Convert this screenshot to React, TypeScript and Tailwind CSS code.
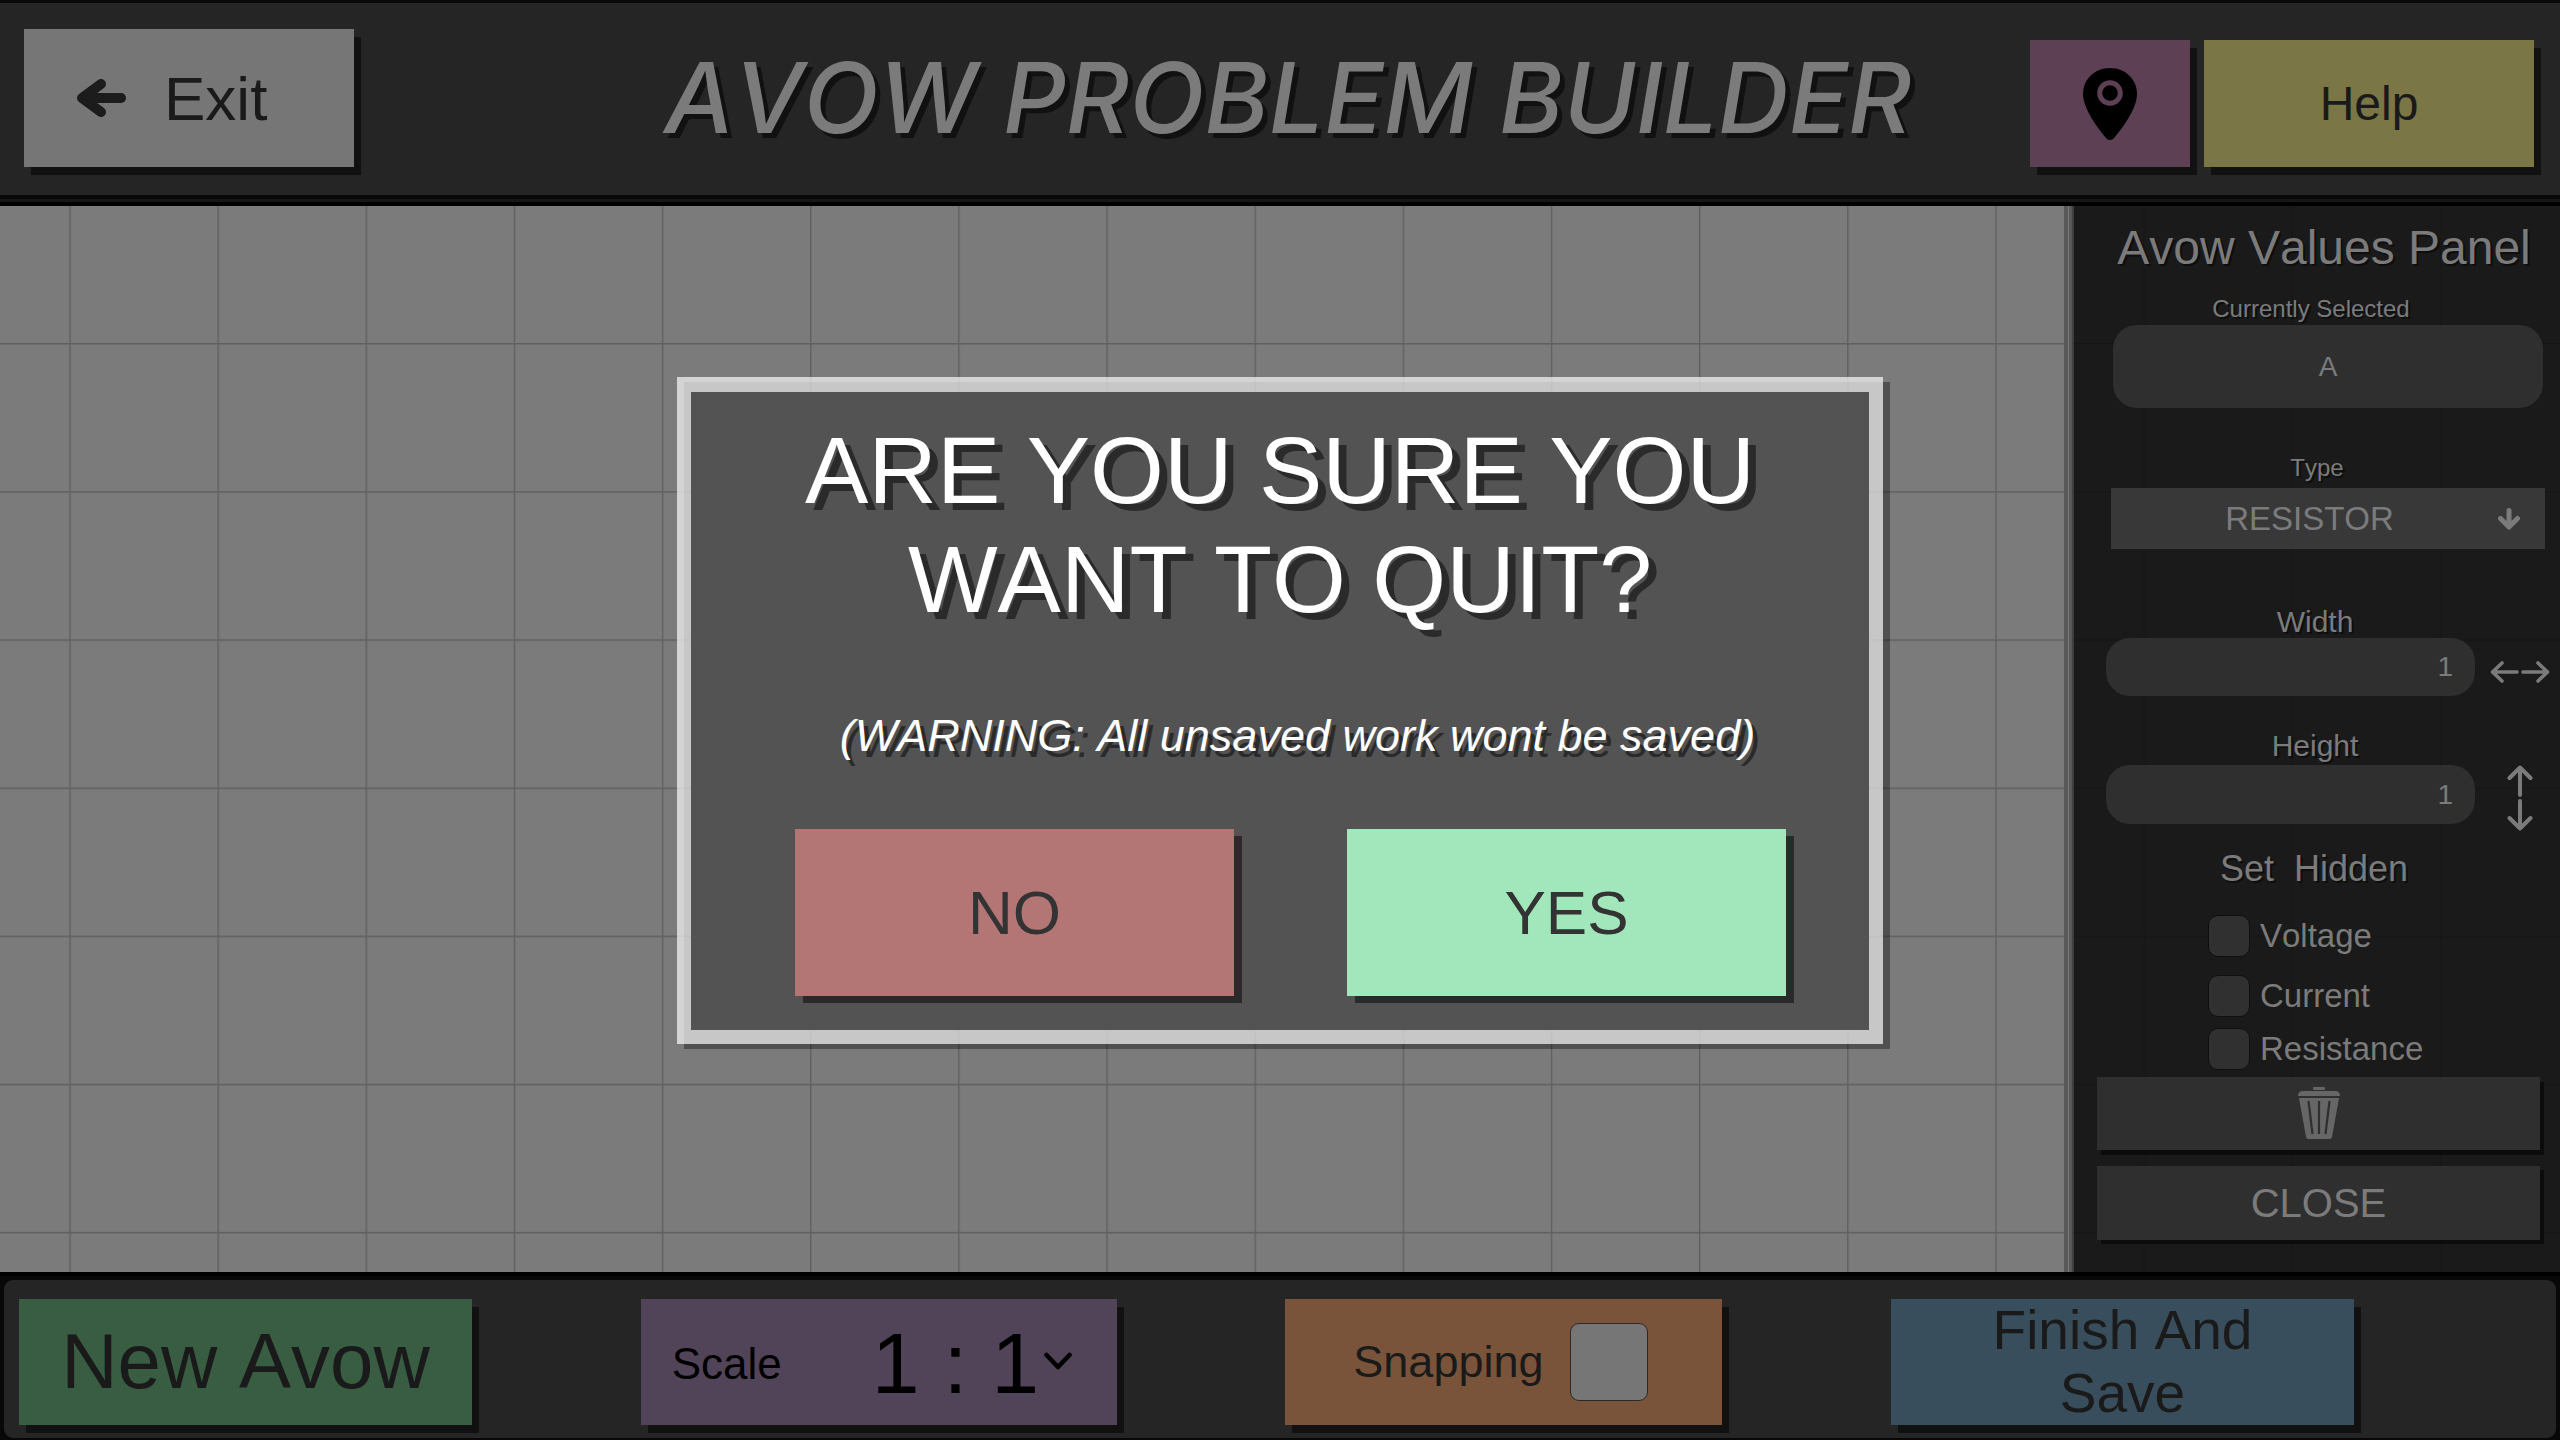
import type { ReactNode } from "react";

const hardShadow = "shadow-[7px_8px_0_#111111]";

function BackArrow() {
  return (
    <svg width="52" height="42" viewBox="0 0 52 42" fill="none" stroke="#1c1c1c" strokeWidth="10" strokeLinecap="round" strokeLinejoin="round" aria-hidden="true">
      <path d="M26 7 L7 21 L26 35" />
      <path d="M9 21 H46" />
      <path d="M8 21 L20 12 V30 Z" fill="#1c1c1c" stroke="none" />
    </svg>
  );
}

function PinIcon() {
  return (
    <svg width="54" height="72" viewBox="0 0 54 72" aria-hidden="true">
      <path d="M27 0 C12 0 0 11 0 26 C0 41 16 62 23.500 70.500 Q27 73.500 30.500 70.500 C38 62 54 41 54 26 C54 11 42 0 27 0 Z" fill="#000" />
      <circle cx="27" cy="25" r="10.300" fill="none" stroke="#5e4055" strokeWidth="5" />
    </svg>
  );
}

function DownArrow() {
  return (
    <svg width="22" height="22" viewBox="0 0 22 22" fill="none" stroke="#7b7b7b" strokeWidth="5" strokeLinecap="round" strokeLinejoin="round" aria-hidden="true">
      <path d="M11 2.500 V18 M2.500 10.500 L11 19 L19.500 10.500" />
    </svg>
  );
}

function HorizontalArrows() {
  return (
    <svg width="60" height="24" viewBox="0 0 60 24" fill="none" stroke="#7b7b7b" strokeWidth="3.600" strokeLinecap="round" strokeLinejoin="round" aria-hidden="true">
      <path d="M12 3 L2.500 12 L12 21 M3 12 H27 M33 12 H57 M48 3 L57.500 12 L48 21" />
    </svg>
  );
}

function VerticalArrows() {
  return (
    <svg width="26" height="66" viewBox="0 0 26 66" fill="none" stroke="#7b7b7b" strokeWidth="4" strokeLinecap="round" strokeLinejoin="round" aria-hidden="true">
      <path d="M2.500 13 L13 2.500 L23.500 13 M13 3 V30 M13 36 V63 M2.500 53 L13 63.500 L23.500 53" />
    </svg>
  );
}

function TrashIcon() {
  return (
    <svg width="44" height="53" viewBox="0 0 44 53" aria-hidden="true">
      <g fill="#666666">
        <rect x="16" y="0" width="12" height="3" rx="1" />
        <path d="M1 9 Q1 4 6 4 H38 Q43 4 43 9 Z" />
        <path d="M2 11 H42 L35 50 Q34.500 52 33 52 H11 Q9.500 52 9 50 Z" />
      </g>
      <g stroke="#2f2f2f" strokeWidth="2.200">
        <path d="M11.500 14 L15.500 47 M22 14 V47 M32.500 14 L28.500 47" />
      </g>
    </svg>
  );
}

function GridLines() {
  return (
    <svg className="absolute inset-0 h-full w-full" aria-hidden="true">
      <defs>
        <pattern id="cells" x="69.300" y="137" width="148.150" height="148.150" patternUnits="userSpaceOnUse">
          <path d="M0.700 0 V148.150 M0 0.700 H148.150" stroke="#606060" strokeWidth="1.400" />
        </pattern>
      </defs>
      <rect width="100%" height="100%" fill="url(#cells)" />
    </svg>
  );
}

function Header() {
  return (
    <header className="border-t-[3px] border-t-[#080808] bg-[#252525]">
      <div className="grid h-[192px] grid-cols-[1fr_auto_1fr] items-end pr-[26px] pb-7 pl-6">
        <button className={`flex h-[138px] w-[330px] items-center bg-[#767676] pl-[51px] text-[62px] text-[#1a1a1a] ${hardShadow}`}>
          <BackArrow />
          <span className="ml-[37px]">Exit</span>
        </button>
        <h1 className="pl-[18px] font-['Inter'] text-[98px] leading-[138px] font-medium text-[#7b7b7b] italic [text-shadow:5px_5px_0_#111111]">
          AVOW PROBLEM BUILDER
        </h1>
        <div className="flex justify-end gap-[14px]">
          <button aria-label="Location" className={`flex h-[127px] w-[160px] items-center justify-center bg-[#5e4055] ${hardShadow}`}>
            <PinIcon />
          </button>
          <button className={`h-[127px] w-[330px] bg-[#7a7645] text-[48px] text-[#1a1a1a] ${hardShadow}`}>Help</button>
        </div>
      </div>
      <div className="h-1 bg-[#080808]" />
      <div className="h-[3px] bg-[#161616]" />
      <div className="h-1 bg-black" />
    </header>
  );
}

const labelShadow = "[text-shadow:2px_2px_0_#0e0e0e]";

function PanelLabel({ htmlFor, className, children }: { htmlFor: string; className: string; children: ReactNode }) {
  return (
    <label htmlFor={htmlFor} className={`block text-center ${labelShadow} ${className}`}>
      {children}
    </label>
  );
}

function HiddenOption({ id, label }: { id: string; label: string }) {
  return (
    <div className="flex h-[42px] items-center gap-[10px] pl-[134px] text-[33px]">
      <input id={id} type="checkbox" className="size-[42px] appearance-none rounded-[10px] border border-[#0f0f0f] bg-[#303030]" />
      <label htmlFor={id}>{label}</label>
    </div>
  );
}

function ValuesPanel() {
  return (
    <aside className="relative flex">
      <div className="w-1 bg-[#595959]" />
      <div className="w-px bg-[#7b7b7b]" />
      <div className="w-[3px] bg-[#575757]" />
      <div className="w-[2px] bg-[#3f3f3f]" />
      <div className="w-[486px] bg-[#0c0c0c]/87 pt-[14px] pb-8 text-[#7b7b7b]">
        <h2 className={`pl-[14px] text-center text-[48px] leading-[56px] ${labelShadow}`}>Avow Values Panel</h2>

        <PanelLabel htmlFor="selected" className="mt-[19px] pr-3 text-[24px] leading-7">Currently Selected</PanelLabel>
        <div className="mt-[2px] pr-[17px] pl-[39px]">
          <input id="selected" defaultValue="A" className="block h-[83px] w-full rounded-[24px] bg-[#2f2f2f] text-center text-[28px]" />
        </div>

        <PanelLabel htmlFor="type" className="mt-[46px] text-[24px] leading-7">Type</PanelLabel>
        <div className="relative mt-[6px] mr-[15px] ml-[37px]">
          <select id="type" className="block h-[61px] w-full appearance-none bg-[#383838] pr-[37px] text-[33px] [text-align-last:center]">
            <option>RESISTOR</option>
          </select>
          <span className="pointer-events-none absolute top-5 right-[25px]">
            <DownArrow />
          </span>
        </div>

        <PanelLabel htmlFor="width" className="mt-[57px] pr-1 text-[30px] leading-8">Width</PanelLabel>
        <div className="flex items-center gap-[15px] pr-[10px] pl-8">
          <input id="width" defaultValue="1" className="h-[58px] min-w-0 flex-1 rounded-[24px] bg-[#2f2f2f] pr-[22px] text-right text-[28px]" />
          <span className="flex w-[60px] justify-center pt-[10px]">
            <HorizontalArrows />
          </span>
        </div>

        <PanelLabel htmlFor="height" className="mt-[34px] pr-1 text-[30px] leading-8">Height</PanelLabel>
        <div className="mt-[3px] flex h-16 items-start gap-[15px] pr-[10px] pl-8">
          <input id="height" defaultValue="1" className="h-[59px] min-w-0 flex-1 rounded-[24px] bg-[#2f2f2f] pr-[22px] text-right text-[28px]" />
          <span className="flex w-[60px] justify-center">
            <VerticalArrows />
          </span>
        </div>

        <fieldset className="pt-5">
          <legend className={`float-left w-full pr-[6px] text-center text-[36px] leading-10 whitespace-pre ${labelShadow}`}>{"Set  Hidden"}</legend>
          <div className="clear-both pt-[26px]">
            <HiddenOption id="voltage" label="Voltage" />
          </div>
          <div className="pt-[18px]">
            <HiddenOption id="current" label="Current" />
          </div>
          <div className="pt-[11px]">
            <HiddenOption id="resistance" label="Resistance" />
          </div>
        </fieldset>

        <div className="mt-[7px] mr-5 ml-[23px] flex flex-col gap-4">
          <button aria-label="Delete" className="flex h-[73px] items-center justify-center bg-[#2f2f2f] shadow-[4px_5px_0_#0c0c0c]">
            <TrashIcon />
          </button>
          <button className="h-[74px] bg-[#2f2f2f] text-[40px] shadow-[4px_4px_0_#0c0c0c]">CLOSE</button>
        </div>
      </div>
    </aside>
  );
}

function Toolbar() {
  return (
    <footer className="border-t-4 border-t-black bg-[#080808] px-1 pt-1 pb-[2px]">
      <div className="flex h-[158px] items-center justify-between rounded-[9px] bg-[#252525] pt-[6px] pr-[202px] pl-[15px] pb-[1px]">
        <button className={`h-[126px] w-[453px] bg-[#385d43] text-[78px] whitespace-nowrap text-[#1a1a1a] ${hardShadow}`}>New Avow</button>
        <div className={`flex h-[126px] w-[476px] items-center bg-[#524458] pl-[31px] text-black ${hardShadow}`}>
          <label htmlFor="scale" className="pt-1 text-[44px]">Scale</label>
          <div className="relative ml-[90px]">
            <select id="scale" className="h-[126px] w-[200px] appearance-none text-[86px]">
              <option>1 : 1</option>
            </select>
            <svg className="pointer-events-none absolute top-[53px] right-0" width="28" height="19" viewBox="0 0 28 19" fill="none" stroke="#000" strokeWidth="4.600" strokeLinecap="round" strokeLinejoin="round" aria-hidden="true">
              <path d="M2.500 3 L14 15 L25.500 3" />
            </svg>
          </div>
        </div>
        <div className={`flex h-[126px] w-[437px] items-center bg-[#79543a] pl-[68px] text-[#1a1a1a] ${hardShadow}`}>
          <label htmlFor="snapping" className="text-[45px]">Snapping</label>
          <input id="snapping" type="checkbox" className="ml-[26px] size-[78px] appearance-none rounded-[9px] border border-[#2a2a2a] bg-[#767676]" />
        </div>
        <button className={`h-[126px] w-[463px] bg-[#394e5d] px-16 text-[55px] leading-[63px] text-[#1a1a1a] ${hardShadow}`}>Finish And Save</button>
      </div>
    </footer>
  );
}

function QuitDialog() {
  return (
    <div className="fixed inset-0 flex items-center justify-center pb-[19px]">
      <div className="relative">
        <div className="absolute top-[5px] left-[7px] h-full w-full bg-black/35" />
        <div className="relative bg-white/68 px-[14px] pt-[15px] pb-[14px]">
          <div role="dialog" aria-modal="true" aria-labelledby="quit-title" className="w-[1178px] bg-[#535353] pt-6 pr-[83px] pb-[34px] pl-[104px]">
            <h2 id="quit-title" className="-ml-[21px] text-center text-[95px] leading-[109px] text-white [text-shadow:8px_7px_0_#2a2a2a]">
              ARE YOU SURE YOU
              <br />
              WANT TO QUIT?
            </h2>
            <p className="mt-[75px] pl-[14px] text-center text-[45px] leading-[54px] text-white italic [text-shadow:5px_6px_0_#2a2a2a]">
              (WARNING: All unsaved work wont be saved)
            </p>
            <div className="mt-[66px] grid grid-cols-2 gap-[113px] text-[62px] text-[#333333]">
              <button className="h-[167px] bg-[#b47575] shadow-[8px_7px_0_#2a2a2a]">NO</button>
              <button className="h-[167px] bg-[#a2e7bb] shadow-[8px_7px_0_#2a2a2a]">YES</button>
            </div>
          </div>
        </div>
      </div>
    </div>
  );
}

export default function App() {
  return (
    <div className="flex min-h-screen flex-col bg-black font-['Liberation_Sans',sans-serif] [font-kerning:none]">
      <Header />
      <main className="relative flex flex-1 justify-end bg-[#7b7b7b]">
        <GridLines />
        <ValuesPanel />
      </main>
      <Toolbar />
      <QuitDialog />
    </div>
  );
}
